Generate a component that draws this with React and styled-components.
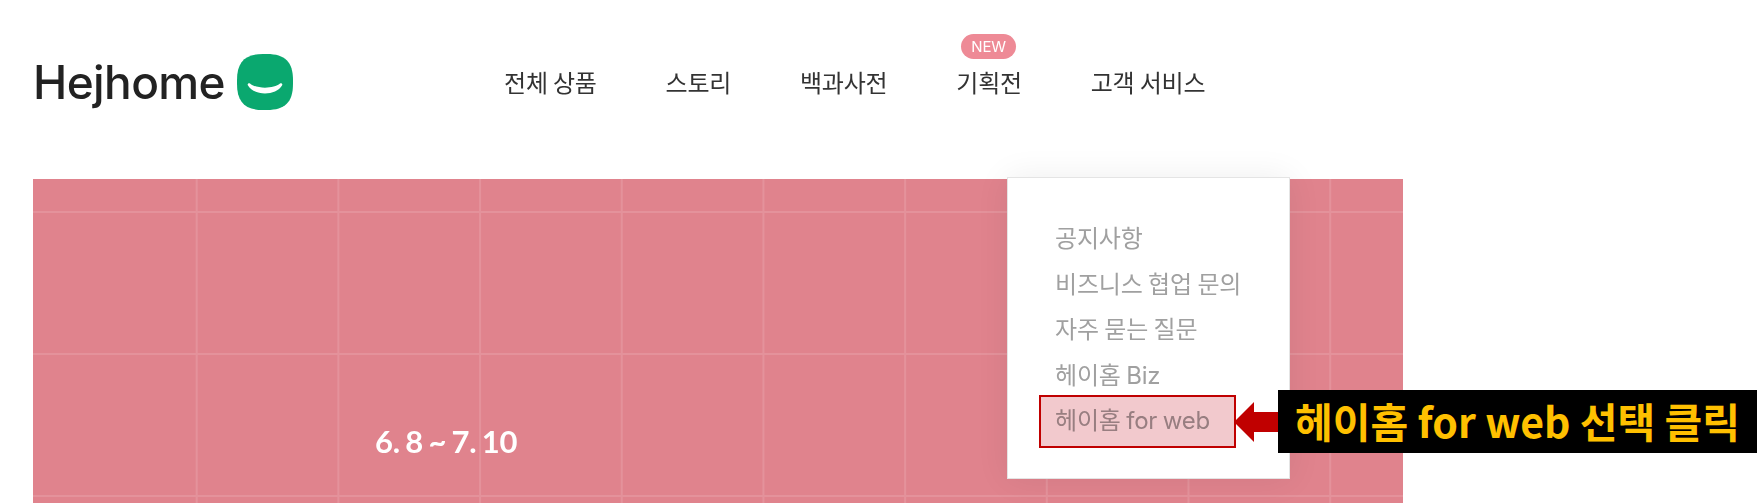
import React from "react";
import styled, { createGlobalStyle } from "styled-components";

const GlobalStyle = createGlobalStyle`
  html, body {
    margin: 0;
    padding: 0;
    background: #ffffff;
  }
  body {
    font-family: "Noto Sans CJK KR", "Noto Sans", sans-serif;
  }
`;

const Page = styled.div`
  position: relative;
  width: 1760px;
  height: 503px;
  overflow: hidden;
  background: #ffffff;
`;

const Header = styled.header`
  display: flex;
  align-items: center;
  height: 179px;
  padding: 0 0 15px 33px;
  box-sizing: border-box;
`;

const Logo = styled.div`
  display: flex;
  align-items: center;
  gap: 12px;
  width: 471px;
`;

const LogoText = styled.span`
  font-family: "Inter", sans-serif;
  font-size: 46px;
  font-weight: 500;
  letter-spacing: -0.6px;
  line-height: 54px;
  color: #222222;
`;

const Nav = styled.nav`
  display: flex;
  gap: 68.8px;
`;

const NavItem = styled.div`
  position: relative;
  font-size: 24px;
  line-height: 32px;
  letter-spacing: -0.2px;
  color: #333333;
  white-space: nowrap;
`;

const NewBadge = styled.span`
  position: absolute;
  left: 50%;
  top: -32px;
  width: 55px;
  height: 25px;
  margin-left: -28px;
  border-radius: 13px;
  background: #ee8a96;
  color: #ffffff;
  font-family: "Inter", sans-serif;
  font-size: 15px;
  line-height: 25px;
  text-align: center;
`;

const Banner = styled.section`
  box-sizing: border-box;
  width: 1370px;
  height: 324px;
  margin-left: 33px;
  padding: 243px 0 0 342px;
  background-color: #e0838d;
  background-image:
    linear-gradient(#e4929b 2px, transparent 2px),
    linear-gradient(#e0838d, #e0838d),
    linear-gradient(90deg, #e4929b 2px, transparent 2px);
  background-size: 100% 142px, 100px 100%, 141.7px 100%;
  background-position: 0 32px, 0 0, 21px 0;
  background-repeat: repeat-y, no-repeat, repeat-x;
`;

const DateText = styled.div`
  font-family: "Lato", sans-serif;
  font-size: 31px;
  font-weight: 700;
  line-height: 38px;
  letter-spacing: -0.2px;
  word-spacing: -2px;
  color: #ffffff;
  white-space: nowrap;
`;

const Dropdown = styled.ul`
  position: absolute;
  left: 1007px;
  top: 177px;
  box-sizing: border-box;
  width: 283px;
  height: 302px;
  margin: 0;
  padding: 38px 0 0 47px;
  list-style: none;
  background: #ffffff;
  border: 1px solid #e4e4e4;
  box-shadow: 0 0 32px rgba(0, 0, 0, 0.07);
`;

const DropdownItem = styled.li`
  font-family: "Inter", "Noto Sans CJK KR", sans-serif;
  font-size: 24px;
  line-height: 45.5px;
  letter-spacing: -0.2px;
  word-spacing: -1px;
  color: #a0a0a0;
  white-space: nowrap;
`;

const Highlight = styled.div`
  position: absolute;
  left: 1039px;
  top: 395px;
  box-sizing: border-box;
  width: 197px;
  height: 53px;
  border: 2px solid #c00000;
  background: #f2c9cd;
  mix-blend-mode: multiply;
`;

const Callout = styled.div`
  position: absolute;
  left: 1234px;
  top: 390px;
  display: flex;
  align-items: center;
`;

const CalloutBox = styled.div`
  box-sizing: border-box;
  width: 479px;
  height: 63px;
  background: #000000;
  color: #ffc000;
  font-size: 41px;
  font-weight: 700;
  line-height: 60px;
  text-align: center;
  white-space: nowrap;
`;

const LogoMark = () => (
  <svg width="56" height="56" viewBox="0 0 56 56">
    <path
      d="M26 0H30C48 0 56 8 56 26V30C56 48 48 56 30 56H26C8 56 0 48 0 30V26C0 8 8 0 26 0Z"
      fill="#0aa86f"
    />
    <path
      d="M13 29.5C19 35 37 35 43 29.5C44.5 28.5 46 30 45 31.5C39 42 17 42 11 31.5C10 30 11.5 28.5 13 29.5Z"
      fill="#ffffff"
    />
  </svg>
);

const ArrowLeft = () => (
  <svg width="44" height="40" viewBox="0 0 44 40">
    <path d="M0 20L20 0V10H44V30H20V40Z" fill="#c00000" />
  </svg>
);

const navItems = ["전체 상품", "스토리", "백과사전", "기획전", "고객 서비스"];
const menuItems = ["공지사항", "비즈니스 협업 문의", "자주 묻는 질문", "헤이홈 Biz", "헤이홈 for web"];

export default function App() {
  return (
    <Page>
      <GlobalStyle />
      <Header>
        <Logo>
          <LogoText>Hejhome</LogoText>
          <LogoMark />
        </Logo>
        <Nav>
          {navItems.map((item) => (
            <NavItem key={item}>
              {item === "기획전" && <NewBadge>NEW</NewBadge>}
              {item}
            </NavItem>
          ))}
        </Nav>
      </Header>
      <Banner>
        <DateText>6. 8 ~ 7. 10</DateText>
      </Banner>
      <Dropdown>
        {menuItems.map((item) => (
          <DropdownItem key={item}>{item}</DropdownItem>
        ))}
      </Dropdown>
      <Highlight />
      <Callout>
        <ArrowLeft />
        <CalloutBox>헤이홈 for web 선택 클릭</CalloutBox>
      </Callout>
    </Page>
  );
}
